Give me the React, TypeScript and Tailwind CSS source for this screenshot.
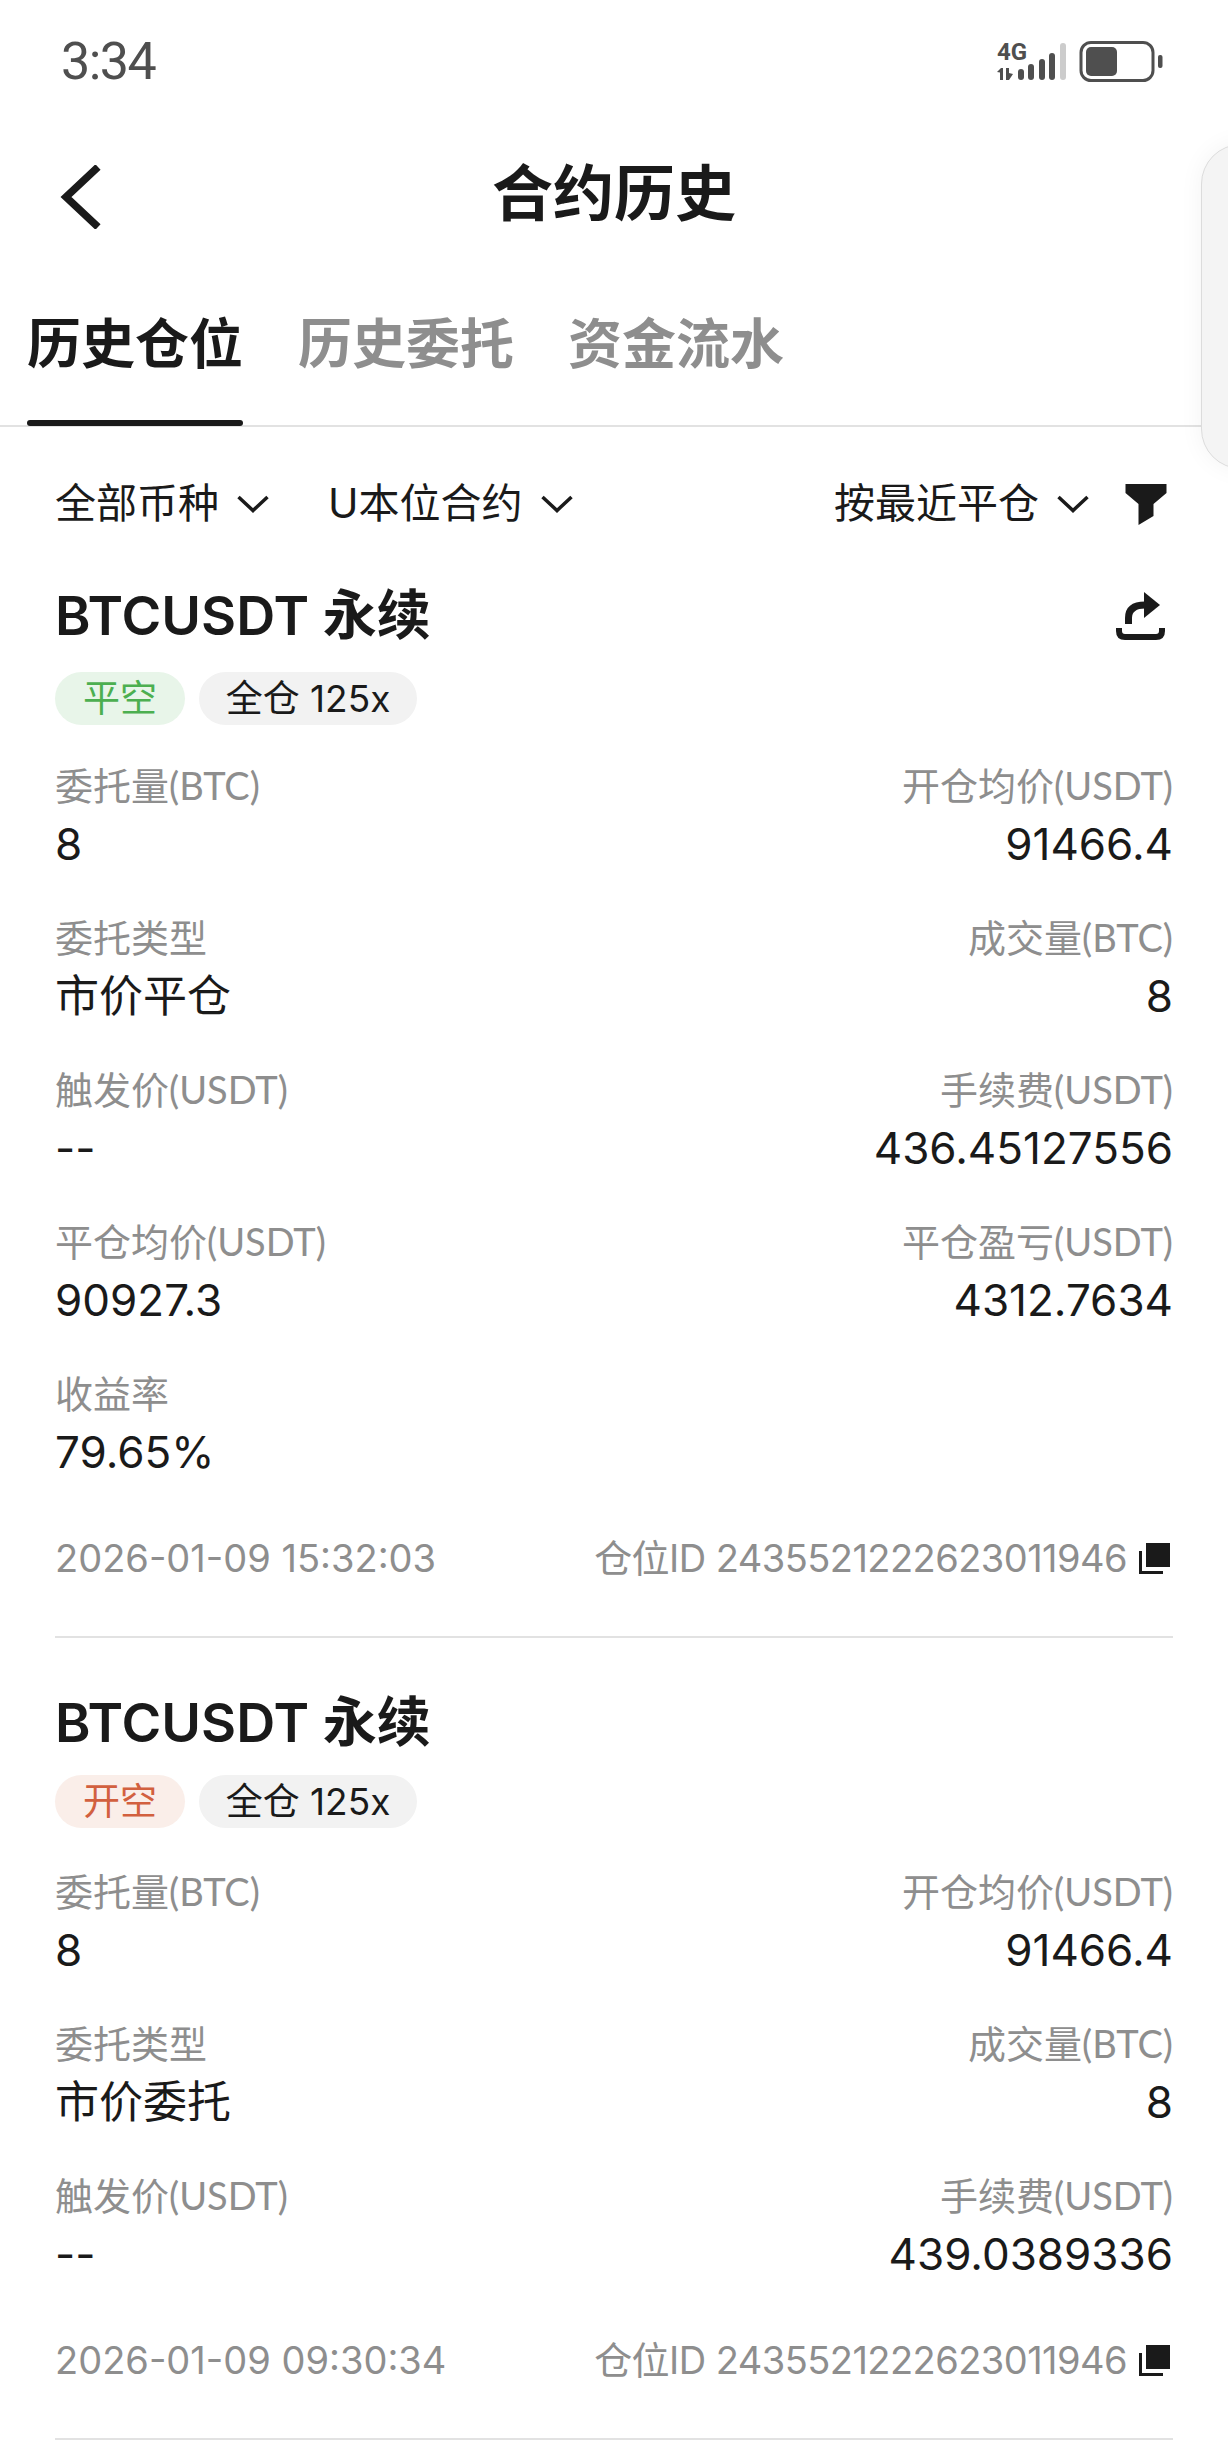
import type { ReactNode } from 'react';

const FONT = "font-['Inter','Noto_Sans_CJK_SC',sans-serif]";

function ChevronDown() {
  return (
    <svg width="32" height="18" viewBox="0 0 32 18" fill="none" stroke="#1a1a1a" strokeWidth="3.5">
      <path d="M1.5 2 L16 15.5 L30.5 2" />
    </svg>
  );
}

function FunnelIcon() {
  return (
    <svg width="42" height="41" viewBox="0 0 41 41" fill="#1a1a1a">
      <path d="M0 0H41V9L28 20V32L13 41V20L0 9Z" />
    </svg>
  );
}

function ShareIcon() {
  return (
    <svg width="49" height="49" viewBox="0 0 49 49" fill="none">
      <path d="M28 0 L44 13 L28 26Z" fill="#1a1a1a" />
      <path d="M12.5 32V26Q12.5 13 29 13" stroke="#1a1a1a" strokeWidth="7" />
      <path d="M3 36V39Q3 45 9 45H40Q46 45 46 39V36" stroke="#1a1a1a" strokeWidth="6" />
    </svg>
  );
}

function CopyIcon() {
  return (
    <svg width="31" height="31" viewBox="0 0 31 31" fill="#1a1a1a">
      <rect x="7" y="0" width="24" height="24" />
      <path d="M0 8H3V28H24V31H0Z" />
    </svg>
  );
}

function StatusIcons() {
  return (
    <svg width="166" height="54" viewBox="0 -6 166 54" fill="#4f4f4f">
      <text x="0" y="19" fontFamily="Roboto, sans-serif" fontWeight="700" fontSize="24">4G</text>
      <path d="M0 31L4 27H6V39H3V31.5ZM9 27H12V32L16 33L12 39H9Z" />
      <rect x="21" y="28" width="6" height="11" rx="3" />
      <rect x="31" y="23" width="6" height="16" rx="3" />
      <rect x="42" y="18" width="6" height="21" rx="3" />
      <rect x="52" y="12" width="6" height="27" rx="3" />
      <rect x="63" y="2" width="6" height="37" rx="3" fill="#cccccc" />
      <rect x="84" y="1.5" width="72" height="38" rx="10" fill="none" stroke="#4f4f4f" strokeWidth="3" />
      <rect x="89" y="6" width="31" height="29" rx="5" />
      <rect x="161" y="14" width="4.5" height="13" rx="2" />
    </svg>
  );
}

function Tag({ className, children }: { className: string; children: ReactNode }) {
  return (
    <span className={`flex h-[53px] items-center justify-center rounded-full text-[37px] ${className}`}>
      {children}
    </span>
  );
}

function Field({ label, value, right }: { label: string; value: string; right?: boolean }) {
  return (
    <div className={right ? 'text-right' : ''}>
      <div className="font-['Lato','Noto_Sans_CJK_SC',sans-serif] text-[38px] leading-[59px] text-[#8e8e8e]">{label}</div>
      <div className="text-[44px] leading-[59px] text-[#1a1a1a]">{value}</div>
    </div>
  );
}

interface CardProps {
  side: string;
  sideClass: string;
  share?: boolean;
  tagsClass: string;
  fieldsClass: string;
  fields: { label: string; value: string; right?: boolean }[];
  time: string;
}

function PositionCard({ side, sideClass, share, tagsClass, fieldsClass, fields, time }: CardProps) {
  return (
    <section className="mx-[55px] border-b-2 border-[#e2e2e2] pb-[48px]">
      <div className="flex h-[70px] items-center justify-between">
        <h2 className="text-[54px] font-semibold leading-none text-[#1a1a1a]">BTCUSDT 永续</h2>
        {share && <span className="mr-[8px]"><ShareIcon /></span>}
      </div>
      <div className={`flex gap-[14px] ${tagsClass}`}>
        <Tag className={`w-[130px] ${sideClass}`}>{side}</Tag>
        <Tag className="w-[218px] bg-[#f2f2f2] text-[#1a1a1a]">全仓 125x</Tag>
      </div>
      <div className={`grid grid-cols-2 gap-y-[34px] ${fieldsClass}`}>
        {fields.map((f) => (
          <Field key={f.label} label={f.label} value={f.value} right={f.right} />
        ))}
      </div>
      <div className="mt-[46px] flex h-[60px] items-center justify-between text-[38px] text-[#8e8e8e]">
        <span>{time}</span>
        <span className="mr-[3px] flex items-center gap-[12px]">
          <span className="tracking-[-0.55px]">仓位ID 2435521222623011946</span>
          <CopyIcon />
        </span>
      </div>
    </section>
  );
}

const closedFields = [
  { label: '委托量(BTC)', value: '8' },
  { label: '开仓均价(USDT)', value: '91466.4', right: true },
  { label: '委托类型', value: '市价平仓' },
  { label: '成交量(BTC)', value: '8', right: true },
  { label: '触发价(USDT)', value: '--' },
  { label: '手续费(USDT)', value: '436.45127556', right: true },
  { label: '平仓均价(USDT)', value: '90927.3' },
  { label: '平仓盈亏(USDT)', value: '4312.7634', right: true },
  { label: '收益率', value: '79.65%' },
];

const openFields = [
  { label: '委托量(BTC)', value: '8' },
  { label: '开仓均价(USDT)', value: '91466.4', right: true },
  { label: '委托类型', value: '市价委托' },
  { label: '成交量(BTC)', value: '8', right: true },
  { label: '触发价(USDT)', value: '--' },
  { label: '手续费(USDT)', value: '439.0389336', right: true },
];

export default function App() {
  return (
    <div className={`relative h-[2450px] w-[1228px] overflow-hidden bg-white ${FONT}`}>
      {/* status bar */}
      <div className="flex h-[124px] items-center justify-between pl-[61px] pr-[65px]">
        <span className="font-['Roboto',sans-serif] text-[52px] tracking-[-1.5px] text-[#4f4f4f]">3:34</span>
        <StatusIcons />
      </div>

      {/* header */}
      <header className="relative flex h-[138px] items-center justify-center pt-[3px]">
        <svg className="absolute left-[60px] top-[41px]" width="42" height="64" viewBox="0 0 42 64" fill="none" stroke="#1a1a1a" strokeWidth="7.5">
          <path d="M38 2 L6 32 L38 62" />
        </svg>
        <h1 className="text-[61px] font-bold text-[#1a1a1a]">合约历史</h1>
      </header>

      {/* tabs */}
      <nav className="flex h-[165px] items-start gap-[54px] border-b-2 border-[#e2e2e2] pl-[27px]">
        <div className="relative flex h-[164px] flex-col pt-[45px]">
          <span className="text-[54px] font-bold leading-[76px] text-[#1a1a1a]">历史仓位</span>
          <span className="absolute bottom-0 left-0 h-[6px] w-full rounded-full bg-[#1a1a1a]" />
        </div>
        <span className="ml-[1px] pt-[45px] text-[54px] font-bold leading-[76px] text-[#8e8e8e]">历史委托</span>
        <span className="pt-[45px] text-[54px] font-bold leading-[76px] text-[#8e8e8e]">资金流水</span>
      </nav>

      {/* filters */}
      <div className="flex h-[154px] items-center pl-[55px] pr-[61px] text-[41px] text-[#1a1a1a]">
        <span>全部币种</span>
        <span className="ml-[18px]"><ChevronDown /></span>
        <span className="ml-[59px]">U本位合约</span>
        <span className="ml-[18px]"><ChevronDown /></span>
        <span className="ml-auto">按最近平仓</span>
        <span className="ml-[18px]"><ChevronDown /></span>
        <span className="ml-[36px]"><FunnelIcon /></span>
      </div>

      <PositionCard
        side="平空"
        sideClass="bg-[#e8f5e9] text-[#4caf50]"
        share
        tagsClass="mt-[21px]"
        fieldsClass="mt-[31px]"
        fields={closedFields}
        time="2026-01-09 15:32:03"
      />
      <div className="h-[50px]" />
      <PositionCard
        side="开空"
        sideClass="bg-[#faeee9] text-[#d2603f]"
        tagsClass="mt-[17px]"
        fieldsClass="mt-[34px]"
        fields={openFields}
        time="2026-01-09 09:30:34"
      />

      {/* floating side panel */}
      <div className="absolute left-[1201px] top-[144px] h-[325px] w-[60px] rounded-l-[40px] border border-[#dcdcdc] bg-[#f4f4f4] shadow-[0_0_24px_rgba(0,0,0,0.05)]" />
    </div>
  );
}
